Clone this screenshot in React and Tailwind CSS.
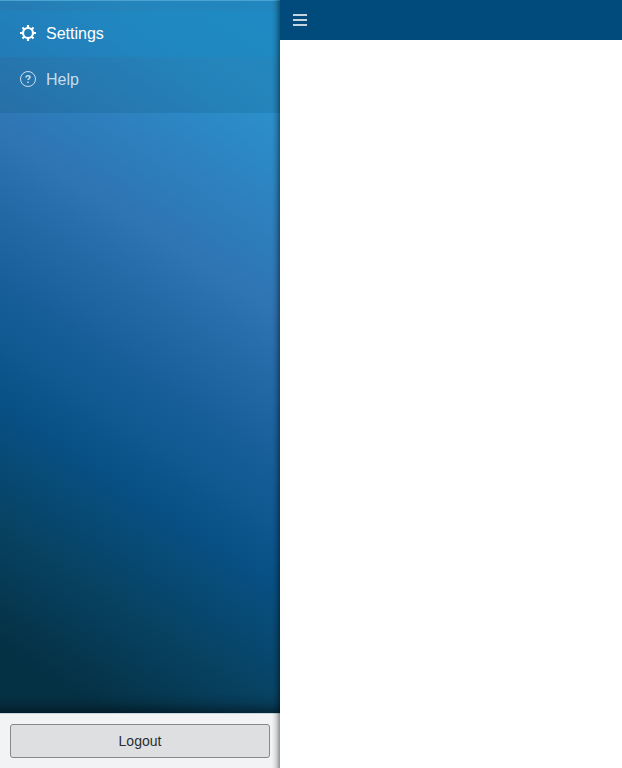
function GearIcon() {
  return (
    <svg viewBox="0 0 16 16" className="size-4 shrink-0" aria-hidden="true">
      <circle cx="8" cy="8" r="5" fill="none" stroke="currentColor" strokeWidth="2.200" />
      <g stroke="currentColor" strokeWidth="2.200">
        <path d="M8 0v3M8 13v3M0 8h3M13 8h3" />
        <path d="M2.500 2.500l2 2M11.500 11.500l2 2M2.500 13.500l2-2M11.500 4.500l2-2" />
      </g>
    </svg>
  );
}

function HelpIcon() {
  return (
    <svg viewBox="0 0 16 16" className="size-4 shrink-0" fill="none" stroke="currentColor" aria-hidden="true">
      <circle cx="8" cy="8" r="7.500" />
      <path d="M6 6.500C6 5.200 6.800 4.700 8 4.700s2 .6 2 1.600c0 1.300-1.900 1.400-1.900 2.700" strokeWidth="1.500" />
      <path d="M8 10.500v1.500" strokeWidth="1.500" />
    </svg>
  );
}

export default function App() {
  return (
    <div className="flex h-screen bg-white font-['Liberation_Sans',Arial,sans-serif]">
      <aside className="relative flex w-[280px] shrink-0 flex-col">
        <div className="flex flex-1 flex-col bg-[linear-gradient(33deg,#053145_0%,#053145_8%,#074262_21%,#085288_36%,#1b629e_51%,#2f74b3_65%,#2b91cc_88%,#2693cf_100%)]">
          <nav className="border-t border-[#4ba3d4] bg-[#00405f]/15 pt-[10px] pb-[10px]">
            <a href="#settings" className="flex h-[46px] items-start gap-[10px] bg-[#1496dc]/20 px-5 pt-[14px] text-base leading-[18px] text-white">
              <GearIcon />
              Settings
            </a>
            <a href="#help" className="flex h-[46px] items-start gap-[10px] px-5 pt-[14px] text-base leading-[18px] text-white/75">
              <HelpIcon />
              Help
            </a>
          </nav>
          <div className="mt-auto h-5 bg-[linear-gradient(to_bottom,transparent,rgba(0,0,0,0.1)_50%,rgba(0,0,0,0.4))]" />
        </div>
        <footer className="border-t border-[#c8d6df] bg-[#f1f3f5] p-[10px]">
          <button type="button" className="block h-[34px] w-full rounded-[3px] border border-[#85898c] bg-[#dedfe1] text-sm text-[#292f33]">
            Logout
          </button>
        </footer>
        <div className="pointer-events-none absolute inset-y-0 right-0 w-2 bg-[linear-gradient(to_right,transparent,rgba(0,0,0,0.12)_50%,rgba(0,0,0,0.4))]" />
      </aside>
      <main className="min-w-0 flex-1">
        <header className="flex h-10 items-center bg-[#004a7c]">
          <button type="button" aria-label="Toggle menu" className="flex size-10 items-center justify-center text-[#c4d4df]">
            <svg viewBox="0 0 14 12" className="h-3 w-[14px]" aria-hidden="true">
              <path d="M0 1h14M0 6h14M0 11h14" stroke="currentColor" strokeWidth="2" />
            </svg>
          </button>
        </header>
      </main>
    </div>
  );
}
